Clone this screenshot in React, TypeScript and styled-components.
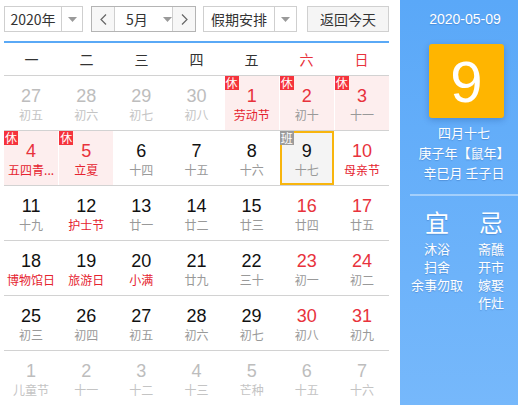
import React from "react";
import styled, { createGlobalStyle } from "styled-components";

const GlobalStyle = createGlobalStyle`
  html, body {
    margin: 0;
    padding: 0;
    background: #fff;
  }
  body {
    font-family: "Liberation Sans", "Noto Sans CJK SC", sans-serif;
  }
`;

// Layout
const Page = styled.div`
  display: flex;
  width: 518px;
  height: 405px;
  overflow: hidden;
`;

const Main = styled.div`
  width: 385px;
  padding: 6px 11px 0 4px;
`;

const Toolbar = styled.div`
  display: flex;
  align-items: center;
  height: 26px;
`;

const Select = styled.div<{ $w: number; $textW: number; $gap?: number }>`
  display: flex;
  width: ${(p) => p.$w}px;
  height: 26px;
  box-sizing: border-box;
  border: 1px solid #cfcfcf;
  margin-right: ${(p) => p.$gap ?? 0}px;
  font-size: 14px;
  color: #333;
  font-family: "Noto Sans CJK SC", sans-serif;

  & > span {
    width: ${(p) => p.$textW}px;
    display: flex;
    align-items: center;
    justify-content: center;
    border-right: 1px solid #cfcfcf;
  }
`;

const ArrowBox = styled.div`
  flex: 1;
  display: flex;
  align-items: center;
  justify-content: center;
`;

const MonthGroup = styled.div`
  display: flex;
  width: 105px;
  height: 26px;
  box-sizing: border-box;
  border: 1px solid #b4b4b4;
  margin-right: 7px;
`;

const NavBtn = styled.div<{ $side: "l" | "r" }>`
  width: 22px;
  display: flex;
  align-items: center;
  justify-content: center;
  background: #f7f7f7;
  ${(p) => (p.$side === "l" ? "border-right: 1px solid #cfcfcf;" : "border-left: 1px solid #cfcfcf;")}
`;

const MonthSelect = styled.div`
  flex: 1;
  display: flex;
  align-items: center;
  font-size: 14px;
  color: #333;
  font-family: "Noto Sans CJK SC", sans-serif;
  padding-left: 11px;
  gap: 15px;
`;

const TodayBtn = styled.div`
  width: 82px;
  height: 26px;
  box-sizing: border-box;
  border: 1px solid #d0d0d0;
  background: #f5f5f5;
  display: flex;
  align-items: center;
  justify-content: center;
  font-size: 14px;
  color: #333;
  font-family: "Noto Sans CJK SC", sans-serif;
`;

const BlueRule = styled.div`
  height: 2px;
  background: #5aa9f6;
  margin-top: 9px;
`;

const WeekHead = styled.div`
  display: grid;
  grid-template-columns: repeat(7, 1fr);
  height: 32px;
  border-bottom: 1px solid #d2d2d2;
`;

const WeekDay = styled.div<{ $red?: boolean }>`
  display: flex;
  align-items: center;
  justify-content: center;
  font-size: 14px;
  font-family: "Noto Sans CJK SC", sans-serif;
  color: ${(p) => (p.$red ? "#e8323c" : "#333")};
`;

const Row = styled.div`
  display: grid;
  grid-template-columns: repeat(7, 1fr);
  column-gap: 1px;
  height: 54px;
  border-bottom: 1px solid #d2d2d2;
`;

const Cell = styled.div<{ $holiday?: boolean; $today?: boolean }>`
  position: relative;
  box-sizing: border-box;
  height: 54px;
  padding-top: ${(p) => (p.$today ? 7 : 9)}px;
  text-align: center;
  background: ${(p) => (p.$today ? "#f4f4f4" : p.$holiday ? "#fdeeee" : "transparent")};
  border: ${(p) => (p.$today ? "2px solid #f8b50d" : "none")};
  min-width: 0;
`;

const Num = styled.div<{ $tone: "normal" | "red" | "gray" }>`
  font-size: 18px;
  line-height: 22px;
  color: ${(p) => (p.$tone === "red" ? "#e8323c" : p.$tone === "gray" ? "#bdbdbd" : "#111")};
`;

const Lunar = styled.div<{ $tone: "normal" | "red" | "gray" }>`
  font-size: 12px;
  line-height: 16px;
  font-family: "Noto Sans CJK SC", sans-serif;
  white-space: nowrap;
  overflow: hidden;
  text-overflow: ellipsis;
  color: ${(p) => (p.$tone === "red" ? "#e5232f" : p.$tone === "gray" ? "#c4c4c4" : "#999")};
`;

const Badge = styled.span<{ $work?: boolean }>`
  position: absolute;
  top: ${(p) => (p.$work ? -2 : 0)}px;
  left: ${(p) => (p.$work ? -2 : 0)}px;
  width: 14px;
  height: 14px;
  line-height: 14px;
  font-size: 12px;
  font-family: "Noto Sans CJK SC", sans-serif;
  color: #fff;
  text-align: center;
  background: ${(p) => (p.$work ? "#9b9b9b" : "#f5333c")};
`;

// Right side panel
const Side = styled.div`
  width: 118px;
  height: 405px;
  background: linear-gradient(#5aa8f8, #76b8fb);
  padding-left: 10px;
  box-sizing: border-box;
  color: #fff;
  text-shadow: 0 1px 1px rgba(40, 90, 160, 0.35);
  font-family: "Noto Sans CJK SC", sans-serif;
  display: flex;
  flex-direction: column;
  align-items: center;
`;

const SideDate = styled.div`
  margin-top: 9px;
  font-family: "Liberation Sans", sans-serif;
  font-size: 14px;
  line-height: 20px;
  padding-left: 2px;
`;

const DayBox = styled.div`
  margin-top: 15px;
  margin-left: 5px;
  width: 75px;
  height: 74px;
  border-radius: 3px;
  background: #ffb500;
  box-shadow: 0 2px 6px rgba(0, 40, 110, 0.25);
  display: flex;
  align-items: center;
  justify-content: center;
  font-family: "Liberation Sans", sans-serif;
  font-size: 58px;
  text-shadow: none;
`;

const LunarInfo = styled.div`
  margin-top: 5px;
  font-size: 13px;
  line-height: 20px;
  text-align: center;
`;

const Sep = styled.div`
  align-self: stretch;
  height: 2px;
  margin-top: 11px;
  background: rgba(255, 255, 255, 0.4);
`;

const YiJi = styled.div`
  align-self: stretch;
  display: grid;
  grid-template-columns: 1fr 1fr;
  margin-top: 11px;
`;

const YiCol = styled.div`
  display: flex;
  flex-direction: column;
  align-items: center;
`;

const YiHead = styled.div`
  font-size: 24px;
  line-height: 30px;
  margin-bottom: 3px;
`;

const YiItem = styled.div`
  font-size: 13px;
  line-height: 18px;
  white-space: nowrap;
`;

const DownArrow = () => (
  <svg width="9" height="5" viewBox="0 0 9 5">
    <path d="M0 0 L9 0 L4.5 5 Z" fill="#9a9a9a" />
  </svg>
);

const Chevron = ({ dir }: { dir: "l" | "r" }) => (
  <svg width="7" height="11" viewBox="0 0 7 11">
    <path
      d={dir === "l" ? "M6 0.5 L1 5.5 L6 10.5" : "M1 0.5 L6 5.5 L1 10.5"}
      fill="none"
      stroke="#666"
      strokeWidth="1.2"
    />
  </svg>
);

type Day = {
  n: number;
  l: string;
  other?: boolean;
  hol?: boolean;
  fest?: boolean;
  today?: boolean;
  work?: boolean;
};

const weeks: Day[][] = [
  [
    { n: 27, l: "初五", other: true },
    { n: 28, l: "初六", other: true },
    { n: 29, l: "初七", other: true },
    { n: 30, l: "初八", other: true },
    { n: 1, l: "劳动节", hol: true, fest: true },
    { n: 2, l: "初十", hol: true },
    { n: 3, l: "十一", hol: true },
  ],
  [
    { n: 4, l: "五四青...", hol: true, fest: true },
    { n: 5, l: "立夏", hol: true, fest: true },
    { n: 6, l: "十四" },
    { n: 7, l: "十五" },
    { n: 8, l: "十六" },
    { n: 9, l: "十七", today: true, work: true },
    { n: 10, l: "母亲节", fest: true },
  ],
  [
    { n: 11, l: "十九" },
    { n: 12, l: "护士节", fest: true },
    { n: 13, l: "廿一" },
    { n: 14, l: "廿二" },
    { n: 15, l: "廿三" },
    { n: 16, l: "廿四" },
    { n: 17, l: "廿五" },
  ],
  [
    { n: 18, l: "博物馆日", fest: true },
    { n: 19, l: "旅游日", fest: true },
    { n: 20, l: "小满", fest: true },
    { n: 21, l: "廿九" },
    { n: 22, l: "三十" },
    { n: 23, l: "初一" },
    { n: 24, l: "初二" },
  ],
  [
    { n: 25, l: "初三" },
    { n: 26, l: "初四" },
    { n: 27, l: "初五" },
    { n: 28, l: "初六" },
    { n: 29, l: "初七" },
    { n: 30, l: "初八" },
    { n: 31, l: "初九" },
  ],
  [
    { n: 1, l: "儿童节", other: true },
    { n: 2, l: "十一", other: true },
    { n: 3, l: "十二", other: true },
    { n: 4, l: "十三", other: true },
    { n: 5, l: "芒种", other: true },
    { n: 6, l: "十五", other: true },
    { n: 7, l: "十六", other: true },
  ],
];

const weekNames = ["一", "二", "三", "四", "五", "六", "日"];

export default function App() {
  return (
    <>
      <GlobalStyle />
      <Page>
        <Main>
          <Toolbar>
            <Select $w={79} $textW={56} $gap={8}>
              <span>2020年</span>
              <ArrowBox>
                <DownArrow />
              </ArrowBox>
            </Select>
            <MonthGroup>
              <NavBtn $side="l">
                <Chevron dir="l" />
              </NavBtn>
              <MonthSelect>
                5月
                <DownArrow />
              </MonthSelect>
              <NavBtn $side="r">
                <Chevron dir="r" />
              </NavBtn>
            </MonthGroup>
            <Select $w={94} $textW={70} $gap={10}>
              <span>假期安排</span>
              <ArrowBox>
                <DownArrow />
              </ArrowBox>
            </Select>
            <TodayBtn>返回今天</TodayBtn>
          </Toolbar>
          <BlueRule />
          <WeekHead>
            {weekNames.map((w, i) => (
              <WeekDay key={w} $red={i >= 5}>
                {w}
              </WeekDay>
            ))}
          </WeekHead>
          {weeks.map((week, wi) => (
            <Row key={wi}>
              {week.map((d, di) => {
                const weekend = di >= 5;
                const numTone = d.other
                  ? "gray"
                  : d.hol || (weekend && !d.work)
                  ? "red"
                  : "normal";
                const lunarTone = d.other ? "gray" : d.fest ? "red" : "normal";
                return (
                  <Cell key={di} $holiday={d.hol} $today={d.today}>
                    {d.hol && <Badge>休</Badge>}
                    {d.work && <Badge $work>班</Badge>}
                    <Num $tone={numTone}>{d.n}</Num>
                    <Lunar $tone={lunarTone}>{d.l}</Lunar>
                  </Cell>
                );
              })}
            </Row>
          ))}
        </Main>
        <Side>
          <SideDate>2020-05-09</SideDate>
          <DayBox>9</DayBox>
          <LunarInfo>
            <div>四月十七</div>
            <div>庚子年【鼠年】</div>
            <div>辛巳月 壬子日</div>
          </LunarInfo>
          <Sep />
          <YiJi>
            <YiCol>
              <YiHead>宜</YiHead>
              <YiItem>沐浴</YiItem>
              <YiItem>扫舍</YiItem>
              <YiItem>余事勿取</YiItem>
            </YiCol>
            <YiCol>
              <YiHead>忌</YiHead>
              <YiItem>斋醮</YiItem>
              <YiItem>开市</YiItem>
              <YiItem>嫁娶</YiItem>
              <YiItem>作灶</YiItem>
            </YiCol>
          </YiJi>
        </Side>
      </Page>
    </>
  );
}
